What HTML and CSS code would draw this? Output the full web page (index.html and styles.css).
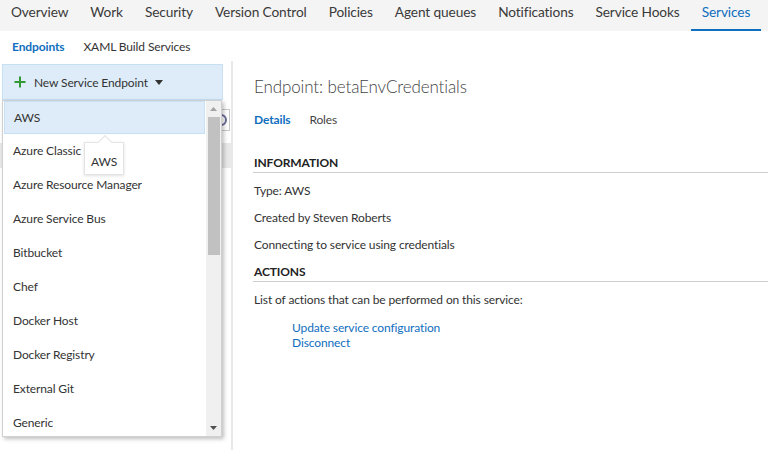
FILE: index.html
```html
<!DOCTYPE html>
<html>
<head>
<meta charset="utf-8">
<link rel="stylesheet" href="styles.css">
</head>
<body>
<nav class="topnav">
  <a class="tab">Overview</a>
  <a class="tab">Work</a>
  <a class="tab">Security</a>
  <a class="tab">Version Control</a>
  <a class="tab">Policies</a>
  <a class="tab">Agent queues</a>
  <a class="tab">Notifications</a>
  <a class="tab">Service Hooks</a>
  <a class="tab active">Services</a>
</nav>
<div class="subnav">
  <a class="sub active">Endpoints</a>
  <a class="sub">XAML Build Services</a>
</div>
<div class="main">
  <aside class="left">
    <div class="toolbar">
      <button class="newbtn">
        <svg class="plus" width="12" height="12" viewBox="0 0 12 12"><path d="M6 0.5v11M0.5 6h11" stroke="#339933" stroke-width="2"/></svg>
        <span>New Service Endpoint</span>
        <svg class="caret" width="8" height="5" viewBox="0 0 8 5"><path d="M0 0h8L4 5z" fill="#333"/></svg>
      </button>
      <div class="dropdown">
        <ul class="menu">
          <li class="item hover">AWS</li>
          <li class="item">Azure Classic</li>
          <li class="item">Azure Resource Manager</li>
          <li class="item">Azure Service Bus</li>
          <li class="item">Bitbucket</li>
          <li class="item">Chef</li>
          <li class="item">Docker Host</li>
          <li class="item">Docker Registry</li>
          <li class="item">External Git</li>
          <li class="item">Generic</li>
        </ul>
        <div class="scrollbar">
          <svg class="arrow" width="7" height="4" viewBox="0 0 7 4"><path d="M0 4h7L3.5 0z" fill="#a3a3a3"/></svg>
          <div class="track"><div class="thumb"></div></div>
          <svg class="arrow" width="7" height="4" viewBox="0 0 7 4"><path d="M0 0h7L3.5 4z" fill="#505050"/></svg>
        </div>
      </div>
      <div class="tooltip">AWS</div>
    </div>
    <div class="filter">
      <div class="filterbox"><span class="search"></span></div>
    </div>
    <div class="selrow"></div>
  </aside>
  <section class="content">
    <h1 class="title">Endpoint: betaEnvCredentials</h1>
    <div class="tabs">
      <a class="ptab active">Details</a>
      <a class="ptab">Roles</a>
    </div>
    <h2 class="section">INFORMATION</h2>
    <p class="line">Type: AWS</p>
    <p class="line">Created by Steven Roberts</p>
    <p class="line">Connecting to service using credentials</p>
    <h2 class="section">ACTIONS</h2>
    <p class="line">List of actions that can be performed on this service:</p>
    <div class="links">
      <a class="link">Update service configuration</a>
      <a class="link">Disconnect</a>
    </div>
  </section>
</div>
</body>
</html>
```
FILE: styles.css
```css
html, body {
  margin: 0;
  padding: 0;
  background: #fff;
  font-family: "Segoe UI", Lato, "Noto Sans", sans-serif;
  color: #333;
  width: 768px;
  height: 450px;
  overflow: hidden;
  letter-spacing: -0.12px;
}

.topnav {
  display: flex;
  height: 31px;
  background: #f4f4f4;
}

.tab {
  display: block;
  padding: 0 11px;
  font-size: 13.7px;
  line-height: 24px;
  color: #3a3a3a;
  box-sizing: border-box;
  height: 31px;
  white-space: nowrap;
}

.tab.active {
  color: #106ebe;
  border-bottom: 2px solid #106ebe;
}

.subnav {
  display: flex;
  gap: 19px;
  padding: 8px 12px 0;
  height: 22px;
  font-size: 12px;
  line-height: 16px;
}

.sub { color: #333; }
.sub.active { color: #106ebe; font-weight: 700; }

.main {
  display: flex;
  height: 397px;
}

.left {
  position: relative;
  width: 233px;
  border-right: 2px solid #e8e8e8;
  box-sizing: border-box;
  flex: none;
}

.toolbar {
  position: relative;
  padding: 3px 0 0 2px;
}

.newbtn {
  display: flex;
  align-items: center;
  width: 221px;
  height: 36px;
  box-sizing: border-box;
  background: #deecf9;
  border: 1px solid #c7e0f4;
  padding: 0 0 0 11px;
  font-family: inherit;
  letter-spacing: inherit;
  font-size: 12px;
  color: #333;
  gap: 8px;
}

.plus { flex: none; }
.caret { margin-left: -1px; }

.dropdown {
  position: absolute;
  top: 39px;
  left: 2px;
  width: 220px;
  height: 337px;
  background: #fff;
  border: 1px solid #d0d0d0;
  box-sizing: border-box;
  box-shadow: 2px 2px 4px rgba(0,0,0,0.25);
  display: flex;
  z-index: 5;
}

.menu {
  list-style: none;
  margin: 0;
  padding: 0;
  flex: 1;
}

.item {
  height: 34px;
  line-height: 34px;
  padding-left: 10px;
  font-size: 12px;
  color: #333;
  box-sizing: border-box;
  white-space: nowrap;
}

.item.hover {
  background: #deecf9;
  border: 1px solid #c7e0f4;
  margin: 0 1px;
  line-height: 31px;
  height: 33px;
  padding-left: 9px;
}

.scrollbar {
  width: 15px;
  background: #f0f0f0;
  display: flex;
  flex-direction: column;
  align-items: center;
}

.arrow { margin: 6px 0; flex: none; }

.track {
  flex: 1;
  width: 100%;
  display: flex;
  justify-content: center;
}

.thumb {
  width: 12px;
  height: 138px;
  background: #c1c1c1;
}

.tooltip {
  position: absolute;
  top: 81px;
  left: 84px;
  width: 40px;
  height: 33px;
  box-sizing: border-box;
  background: #fff;
  border: 1px solid #e4e4e4;
  box-shadow: 0 1px 3px rgba(0,0,0,0.12);
  font-size: 12px;
  line-height: 38px;
  text-align: center;
  color: #333;
  z-index: 6;
}

.tooltip::before {
  content: "";
  position: absolute;
  top: -6px;
  left: 15px;
  width: 9px;
  height: 9px;
  background: #fff;
  border-left: 1px solid #e4e4e4;
  border-top: 1px solid #e4e4e4;
  transform: rotate(45deg);
}

.filter {
  padding: 9px 0 0 8px;
}

.filterbox {
  height: 22px;
  width: 222px;
  border: 1px solid #c8c8c8;
  box-sizing: border-box;
  position: relative;
}

.search {
  position: absolute;
  right: 2px;
  top: 4px;
  width: 8px;
  height: 8px;
  border: 2px solid #6a6a9a;
  border-radius: 50%;
}

.selrow {
  margin-top: 12px;
  height: 25px;
  background: #e8e8e8;
}

.content {
  flex: 1;
  padding-left: 21px;
  min-width: 0;
}

.title {
  margin: 15px 0 0;
  font-size: 17px;
  font-weight: 300;
  color: #444;
  line-height: 22px;
}

.tabs {
  display: flex;
  gap: 19px;
  margin-top: 14px;
  font-size: 12px;
  line-height: 16px;
}

.ptab { color: #444; }
.ptab.active { color: #106ebe; font-weight: 700; }

.section {
  margin: 27px 0 0 -1px;
  padding: 0 0 1px 1px;
  font-size: 12px;
  font-weight: 700;
  color: #222;
  line-height: 16px;
  border-bottom: 1px solid #cfcfcf;
}

.section + .line { margin-top: 10px; }

.line {
  margin: 11px 0 0;
  font-size: 12px;
  line-height: 16px;
  color: #333;
}

.content .section:nth-of-type(2) { margin-top: 11px; }

.links {
  display: flex;
  flex-direction: column;
  align-items: flex-start;
  padding-left: 38px;
  margin-top: 12px;
}

.link {
  font-size: 12px;
  line-height: 15px;
  color: #106ebe;
}
```
